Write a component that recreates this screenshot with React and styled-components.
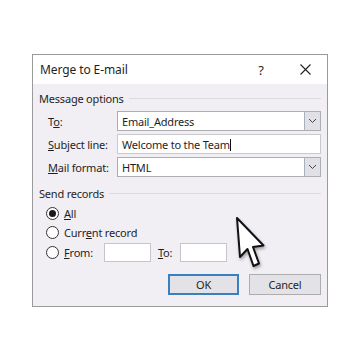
import React from "react";
import styled, { createGlobalStyle } from "styled-components";

const Global = createGlobalStyle`
    html, body {
        margin: 0;
        padding: 0;
        background: #ffffff;
        font-family: "Noto Sans", "Open Sans", sans-serif;
        color: #1f1f1f;
    }
`;

const Page = styled.div`
    width: 360px;
    height: 360px;
    padding: 54px 0 0 32px;
    box-sizing: border-box;
    position: relative;
`;

const Dialog = styled.div`
    width: 296px;
    height: 253px;
    box-sizing: border-box;
    border: 1px solid #9a9a9a;
    background: #f1eff4;
    display: flex;
    flex-direction: column;
`;

const TitleBar = styled.div`
    height: 29px;
    background: #ffffff;
    display: flex;
    align-items: center;
    padding: 0 0 0 7px;
    font-size: 12px;
    letter-spacing: -0.1px;

    .title {
        flex: 1;
    }
    .help {
        width: 20px;
        text-align: center;
        margin-right: 24px;
        font-size: 13px;
    }
    .close {
        width: 20px;
        margin-right: 12px;
        display: flex;
        justify-content: center;
    }
`;

const Body = styled.div`
    flex: 1;
    padding: 6px 6px 0 6px;
    display: flex;
    flex-direction: column;
    font-size: 11px;
    letter-spacing: -0.2px;
`;

const GroupHead = styled.div`
    display: flex;
    align-items: center;
    gap: 5px;
    height: 16px;

    &::after {
        content: "";
        flex: 1;
        height: 1px;
        background: #dcdae0;
    }
`;

const Fields = styled.div`
    display: grid;
    grid-template-columns: 69px 1fr;
    row-gap: 3px;
    padding-left: 9px;
    margin-top: 5px;
    align-items: center;
`;

const Label = styled.span`
    margin-left: ${(p) => p.$gap || 0}px;

    u {
        text-decoration: underline;
        text-underline-offset: 1px;
    }
`;

const Field = styled.div`
    height: 20px;
    box-sizing: border-box;
    border: 1px solid ${(p) => (p.$light ? "#c9c8cc" : "#aeadb2")};
    background: #ffffff;
    display: flex;
    align-items: center;
    padding-left: 4px;

    .text {
        flex: 1;
        white-space: nowrap;
    }
    .caret {
        display: inline-block;
        width: 1px;
        height: 12px;
        background: #111;
        vertical-align: -2px;
    }
`;

const DropBtn = styled.div`
    width: 16px;
    height: 18px;
    box-sizing: border-box;
    border-left: 1px solid #a8b0c0;
    background: #e1e0e6;
    display: flex;
    align-items: center;
    justify-content: center;
`;

const Records = styled.div`
    margin-top: 8px;
`;

const RadioList = styled.div`
    display: flex;
    flex-direction: column;
    gap: 3.5px;
    padding-left: 7px;
    margin-top: 4px;
`;

const RadioRow = styled.div`
    display: flex;
    align-items: center;
    height: 16px;
    gap: 5px;
`;

const Radio = styled.span`
    width: 13px;
    height: 13px;
    box-sizing: border-box;
    border: 1px solid #333;
    border-radius: 50%;
    background: #fff;
    display: flex;
    align-items: center;
    justify-content: center;

    &::after {
        content: "";
        width: 7px;
        height: 7px;
        border-radius: 50%;
        background: ${(p) => (p.$checked ? "#1a1a1a" : "transparent")};
    }
`;

const SmallBox = styled.div`
    width: 47px;
    height: 19px;
    box-sizing: border-box;
    border: 1px solid #c6c5ca;
    background: #fff;
    margin-left: ${(p) => p.$gap}px;
`;

const Buttons = styled.div`
    display: flex;
    justify-content: flex-end;
    gap: 10px;
    margin-top: 14px;
`;

const Button = styled.div`
    width: ${(p) => (p.$primary ? 71 : 72)}px;
    height: 21px;
    box-sizing: border-box;
    border: ${(p) => (p.$primary ? "2px solid #3a7fbf" : "1px solid #adadad")};
    background: #e3e2e6;
    display: flex;
    align-items: center;
    justify-content: center;
    font-size: 11px;
`;

const Cursor = styled.svg`
    position: absolute;
    left: 235px;
    top: 216px;
    filter: drop-shadow(1px 2px 1.5px rgba(0, 0, 0, 0.35));
`;

const Chevron = () => (
    <svg width="9" height="6" viewBox="0 0 9 6">
        <path d="M1 1 L4.5 4.5 L8 1" fill="none" stroke="#444" strokeWidth="1" />
    </svg>
);

export default function App() {
    return (
        <>
            <Global />
            <Page>
                <Dialog>
                    <TitleBar>
                        <span className="title">Merge to E-mail</span>
                        <span className="help">?</span>
                        <span className="close">
                            <svg width="11" height="11" viewBox="0 0 11 11">
                                <path d="M0.5 0.5 L10.5 10.5 M10.5 0.5 L0.5 10.5" stroke="#222" strokeWidth="1.1" />
                            </svg>
                        </span>
                    </TitleBar>
                    <Body>
                        <GroupHead>Message options</GroupHead>
                        <Fields>
                            <Label>T<u>o</u>:</Label>
                            <Field>
                                <span className="text">Email_Address</span>
                                <DropBtn><Chevron /></DropBtn>
                            </Field>
                            <Label><u>S</u>ubject line:</Label>
                            <Field $light>
                                <span className="text">Welcome to the Team<span className="caret" /></span>
                            </Field>
                            <Label><u>M</u>ail format:</Label>
                            <Field>
                                <span className="text">HTML</span>
                                <DropBtn><Chevron /></DropBtn>
                            </Field>
                        </Fields>
                        <Records>
                            <GroupHead>Send records</GroupHead>
                            <RadioList>
                                <RadioRow>
                                    <Radio $checked />
                                    <Label><u>A</u>ll</Label>
                                </RadioRow>
                                <RadioRow>
                                    <Radio />
                                    <Label>Curr<u>e</u>nt record</Label>
                                </RadioRow>
                                <RadioRow>
                                    <Radio />
                                    <Label><u>F</u>rom:</Label>
                                    <SmallBox $gap={6} />
                                    <Label $gap={2}><u>T</u>o:</Label>
                                    <SmallBox $gap={3} />
                                </RadioRow>
                            </RadioList>
                        </Records>
                        <Buttons>
                            <Button $primary>OK</Button>
                            <Button>Cancel</Button>
                        </Buttons>
                    </Body>
                </Dialog>
                <Cursor width="32" height="54" viewBox="0 0 32 54">
                    <path
                        d="M2 2 L5 41 L12.5 33 L18.5 50 L24 47.5 L18 31 L28.5 29.5 Z"
                        fill="#ffffff"
                        stroke="#111"
                        strokeWidth="2"
                        strokeLinejoin="round"
                    />
                </Cursor>
            </Page>
        </>
    );
}
